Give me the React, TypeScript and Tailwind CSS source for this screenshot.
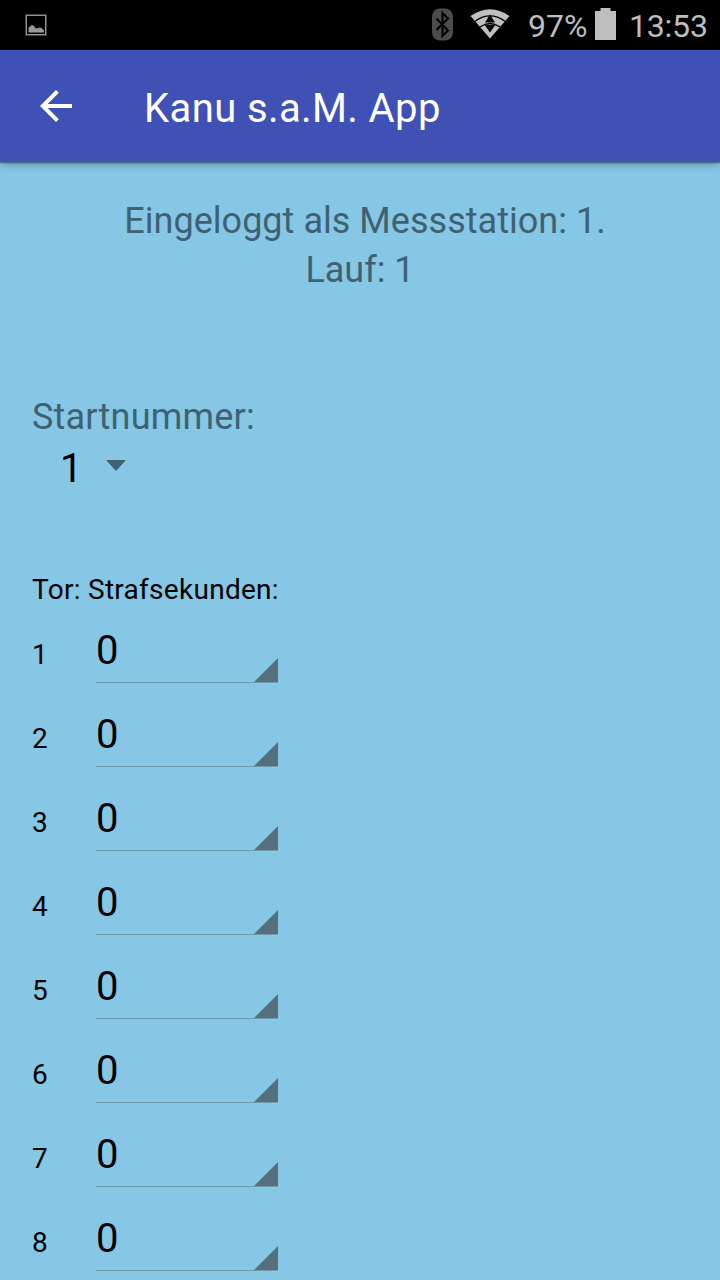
function PictureIcon() {
  return (
    <svg width="22" height="22" viewBox="0 0 22 22" aria-hidden="true">
      <rect x="1.25" y="1.25" width="19.5" height="19.5" fill="none" stroke="#999" strokeWidth="1.4" />
      <path d="M3.5 18.5V13.5L5.5 12L7 11L9 12L10.5 14.2L13 14.2L14.8 13.2L16.6 14.2L19 16.5V18.5Z" fill="#999" />
    </svg>
  );
}

function BluetoothIcon() {
  return (
    <svg width="22" height="33" viewBox="0 0 22 33" aria-hidden="true">
      <rect x="0" y="0.5" width="21" height="32" rx="8" fill="#4c4c4c" />
      <path d="M4.5 10.5L16 22.5L10.5 28V5L16 10.5L4.5 22" fill="none" stroke="#000" strokeWidth="2.1" />
    </svg>
  );
}

function WifiIcon() {
  return (
    <svg width="40" height="30" viewBox="0 0 40 30" aria-hidden="true">
      <path d="M0.5 7Q20 -6.5 39.5 7L20 29.5Z" fill="#c0c0c0" />
      <path d="M5 12.2Q20 1.5 35 12.2M10 18Q20 11 30 18" fill="none" stroke="#000" strokeWidth="1.4" />
      <path d="M20 5.5L25 13.5H15ZM14.5 15.8H25.5L20 23.5Z" fill="#000" />
    </svg>
  );
}

function BatteryIcon() {
  return (
    <svg width="21" height="32" viewBox="0 0 21 32" aria-hidden="true">
      <path d="M0 3H5.5V0H15.5V3H21V32H0Z" fill="#bebebe" />
    </svg>
  );
}

function StatusBar() {
  return (
    <div className="flex h-[50px] shrink-0 items-start bg-black text-[32px] leading-[38px] text-[#bebebe]">
      <div className="mt-[14px] ml-[25px]"><PictureIcon /></div>
      <div className="mt-2 ml-[385px] w-[22px]"><BluetoothIcon /></div>
      <div className="mt-[9px] ml-[16px] w-10"><WifiIcon /></div>
      <span className="mt-[7px] ml-[18px] w-[67px] whitespace-nowrap">97%</span>
      <div className="mt-2"><BatteryIcon /></div>
      <span className="mt-[7px] ml-[13px] whitespace-nowrap tracking-[-0.2px]">13:53</span>
    </div>
  );
}

function GateRow({ gate, seconds }: { gate: number; seconds: number }) {
  return (
    <div className="flex h-[84px] shrink-0 items-start pl-8 pt-[18px]">
      <span className="mt-[10px] w-16 text-[28px] leading-[38px]">{gate}</span>
      <button className="relative flex h-[57px] w-[182px] items-start border-b border-[#6f9bae] pt-px text-[40px] leading-[48px]">
        {seconds}
        <svg className="absolute right-0 bottom-0" width="24" height="24" viewBox="0 0 24 24" aria-hidden="true">
          <path d="M24 0V24H0Z" fill="#566f7c" />
        </svg>
      </button>
    </div>
  );
}

const gates = [1, 2, 3, 4, 5, 6, 7, 8];

export default function App() {
  return (
    <div className="flex h-[1280px] w-[720px] flex-col overflow-hidden bg-[#85c7e5] font-[Roboto,sans-serif] text-black">
      <StatusBar />
      <header className="z-10 flex h-28 shrink-0 items-center bg-[#3f51b5] text-white shadow-[0_1px_2px_rgba(0,0,0,0.5),0_4px_8px_rgba(0,0,0,0.18)]">
        <button className="ml-10" aria-label="Zurück">
          <svg width="32" height="32" viewBox="4 4 16 16" fill="#fff" aria-hidden="true">
            <path d="M20 11H7.83l5.59-5.59L12 4l-8 8 8 8 1.41-1.41L7.83 13H20v-2z" />
          </svg>
        </button>
        <h1 className="ml-[72px] pt-[6px] text-[40px] leading-[48px] tracking-[0.4px]">Kanu s.a.M. App</h1>
      </header>
      <main className="flex flex-col pt-[35px]">
        <p className="text-center text-[36px] leading-[49px] text-[#3f6172]">
          <span className="pl-[10px] tracking-[0.03px]">Eingeloggt als Messstation: 1.</span>
          <br />
          Lauf: 1
        </p>
        <label className="mt-[98px] pl-8 text-[36px] leading-[49px] tracking-[0.2px] text-[#3f6172]">Startnummer:</label>
        <button className="mt-[3px] flex h-12 items-center pl-[60px] text-[40px] leading-[48px]">
          <span className="w-[46px] text-left">1</span>
          <svg className="mb-[7px]" width="20" height="11" viewBox="0 0 20 11" aria-hidden="true">
            <path d="M0 0H20L10 11Z" fill="#3f6172" />
          </svg>
        </button>
        <div className="mt-[78px] flex pl-8 text-[28px] leading-[38px] tracking-[0.28px]">
          <span className="w-14">Tor:</span>
          <span>Strafsekunden:</span>
        </div>
        <div className="-mt-px flex flex-col">
          {gates.map((gate) => (
            <GateRow key={gate} gate={gate} seconds={0} />
          ))}
        </div>
      </main>
    </div>
  );
}
